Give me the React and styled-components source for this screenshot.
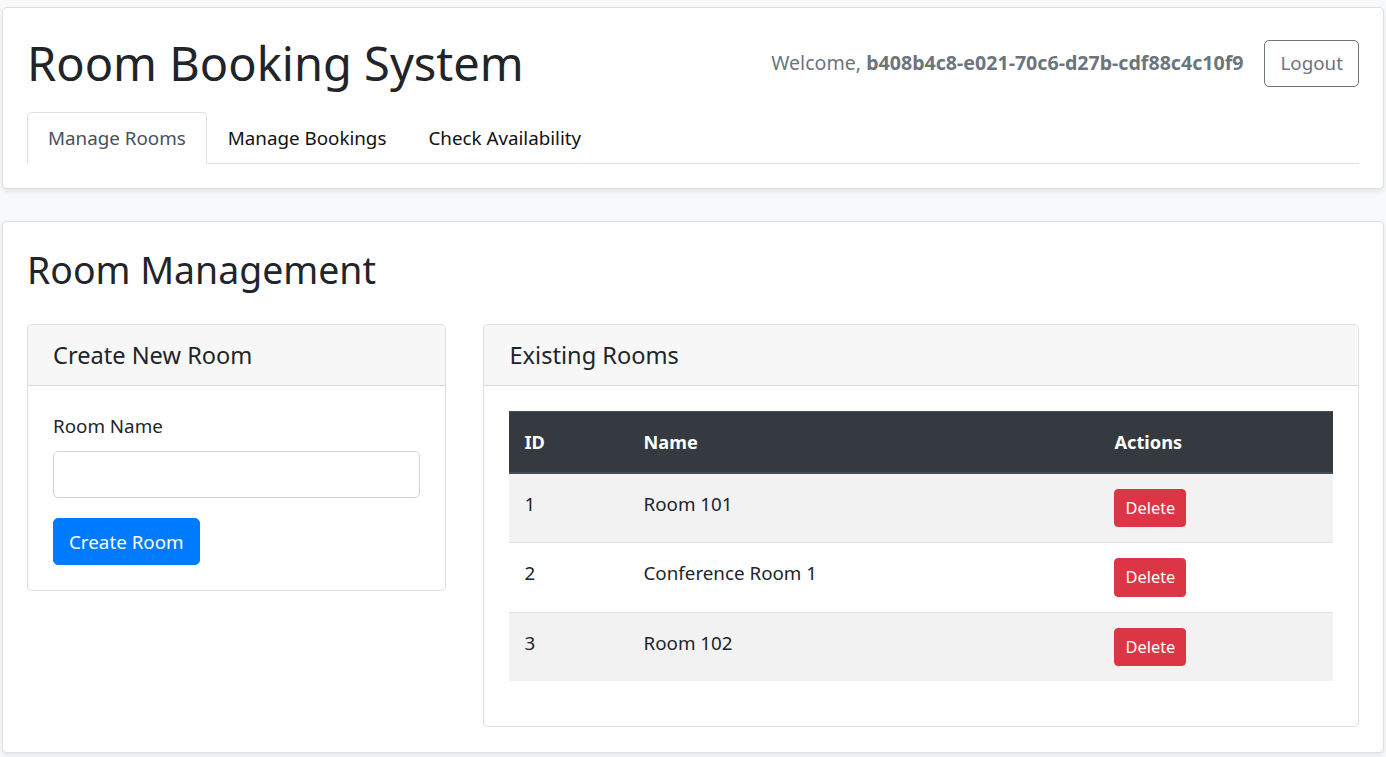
import React from "react"
import styled, { createGlobalStyle } from "styled-components"

const GlobalStyle = createGlobalStyle`
  * { box-sizing: border-box; }
  body {
    margin: 0;
    background: #f8f9fa;
    font-family: "Noto Sans", "Open Sans", sans-serif;
    font-size: 18.8px;
    line-height: 30px;
    color: #212529;
  }
`

const Page = styled.div`
  padding: 7px 2px 5px;
  display: flex;
  flex-direction: column;
  gap: 32px;
`

const Card = styled.div`
  background: #fff;
  border: 1px solid rgba(0, 0, 0, 0.125);
  border-radius: 5px;
  box-shadow: 0 2.5px 5px rgba(0, 0, 0, 0.075);
  padding: ${p => (p.header ? "25px 24px 24px" : "24px 24px 25px")};
`

const HeaderRow = styled.div`
  display: flex;
  align-items: center;
  justify-content: space-between;
  margin-bottom: 19px;
`

const Title = styled.h1`
  margin: 0;
  font-size: 47px;
  font-weight: 400;
  line-height: 60px;
`

const UserBox = styled.div`
  display: flex;
  align-items: center;
  gap: 21px;
`

const Welcome = styled.span`
  color: #6c757d;
  font-size: 19.6px;
  b { font-weight: 700; }
`

const OutlineButton = styled.button`
  font: inherit;
  line-height: 30px;
  color: #6c757d;
  background: transparent;
  border: 1px solid #6c757d;
  border-radius: 5px;
  padding: 7.5px 15px;
`

const Tabs = styled.ul`
  display: flex;
  list-style: none;
  margin: 0;
  padding: 0;
  border-bottom: 1px solid #dee2e6;
`

const Tab = styled.li`
  margin-bottom: -1px;
  padding: 10px 20px;
  border: 1px solid ${p => (p.active ? "#dee2e6" : "transparent")};
  border-bottom-color: ${p => (p.active ? "#fff" : "transparent")};
  border-radius: 5px 5px 0 0;
  background: ${p => (p.active ? "#fff" : "transparent")};
  color: ${p => (p.active ? "#495057" : "#111")};
`

const SectionTitle = styled.h2`
  margin: 0 0 30px;
  font-size: 37.4px;
  font-weight: 400;
  line-height: 48px;
`

const Row = styled.div`
  display: flex;
  margin: 0 -18.75px;
  align-items: flex-start;
`

const Col = styled.div`
  flex: 0 0 ${p => p.size}%;
  max-width: ${p => p.size}%;
  padding: 0 18.75px;
`

const Panel = styled.div`
  border: 1px solid rgba(0, 0, 0, 0.125);
  border-radius: 5px;
  background: #fff;
`

const PanelHeader = styled.div`
  background: rgba(0, 0, 0, 0.03);
  border-bottom: 1px solid rgba(0, 0, 0, 0.125);
  padding: 15px 25px;
  border-radius: 5px 5px 0 0;
`

const PanelTitle = styled.h5`
  margin: 0;
  font-size: 23.6px;
  font-weight: 400;
  line-height: 30px;
`

const PanelBody = styled.div`
  padding: 25px;
`

const Label = styled.label`
  display: block;
  margin-bottom: 10px;
`

const Input = styled.input`
  display: block;
  width: 100%;
  height: 47px;
  margin-bottom: 20px;
  border: 1px solid #ced4da;
  border-radius: 5px;
  font: inherit;
  padding: 7.5px 15px;
`

const PrimaryButton = styled.button`
  font: inherit;
  line-height: 30px;
  color: #fff;
  background: #007bff;
  border: 1px solid #007bff;
  border-radius: 5px;
  padding: 7.5px 15px;
`

const Table = styled.table`
  width: 100%;
  border-collapse: collapse;
  table-layout: fixed;
  margin-bottom: 20px;

  th,
  td {
    padding: 15px;
    text-align: left;
    vertical-align: top;
    border-top: 1px solid #dee2e6;
  }

  thead th {
    background: #343a40;
    color: #fff;
    font-size: 18.2px;
    font-weight: 700;
    border-top-color: #454d55;
    border-bottom: 2px solid #454d55;
  }

  tbody tr:nth-child(odd) {
    background: #f2f2f2;
  }
`

const DangerButton = styled.button`
  font: inherit;
  font-size: 16.4px;
  line-height: 26.4px;
  color: #fff;
  background: #dc3545;
  border: 1px solid #dc3545;
  border-radius: 4px;
  padding: 5px 10px;
`

const rooms = [
  { id: 1, name: "Room 101" },
  { id: 2, name: "Conference Room 1" },
  { id: 3, name: "Room 102" },
]

const App = () => {
  return (
    <>
      <GlobalStyle />
      <Page>
        <Card header>
          <HeaderRow>
            <Title>Room Booking System</Title>
            <UserBox>
              <Welcome>
                Welcome, <b>b408b4c8-e021-70c6-d27b-cdf88c4c10f9</b>
              </Welcome>
              <OutlineButton>Logout</OutlineButton>
            </UserBox>
          </HeaderRow>
          <Tabs>
            <Tab active>Manage Rooms</Tab>
            <Tab>Manage Bookings</Tab>
            <Tab>Check Availability</Tab>
          </Tabs>
        </Card>

        <Card>
          <SectionTitle>Room Management</SectionTitle>
          <Row>
            <Col size={33.3333}>
              <Panel>
                <PanelHeader>
                  <PanelTitle>Create New Room</PanelTitle>
                </PanelHeader>
                <PanelBody>
                  <Label htmlFor="roomName">Room Name</Label>
                  <Input id="roomName" type="text" />
                  <PrimaryButton>Create Room</PrimaryButton>
                </PanelBody>
              </Panel>
            </Col>
            <Col size={66.6667}>
              <Panel>
                <PanelHeader>
                  <PanelTitle>Existing Rooms</PanelTitle>
                </PanelHeader>
                <PanelBody>
                  <Table>
                    <colgroup>
                      <col style={{ width: "119px" }} />
                      <col style={{ width: "471px" }} />
                      <col />
                    </colgroup>
                    <thead>
                      <tr>
                        <th>ID</th>
                        <th>Name</th>
                        <th>Actions</th>
                      </tr>
                    </thead>
                    <tbody>
                      {rooms.map(room => (
                        <tr key={room.id}>
                          <td>{room.id}</td>
                          <td>{room.name}</td>
                          <td>
                            <DangerButton>Delete</DangerButton>
                          </td>
                        </tr>
                      ))}
                    </tbody>
                  </Table>
                </PanelBody>
              </Panel>
            </Col>
          </Row>
        </Card>
      </Page>
    </>
  )
}

export default App
